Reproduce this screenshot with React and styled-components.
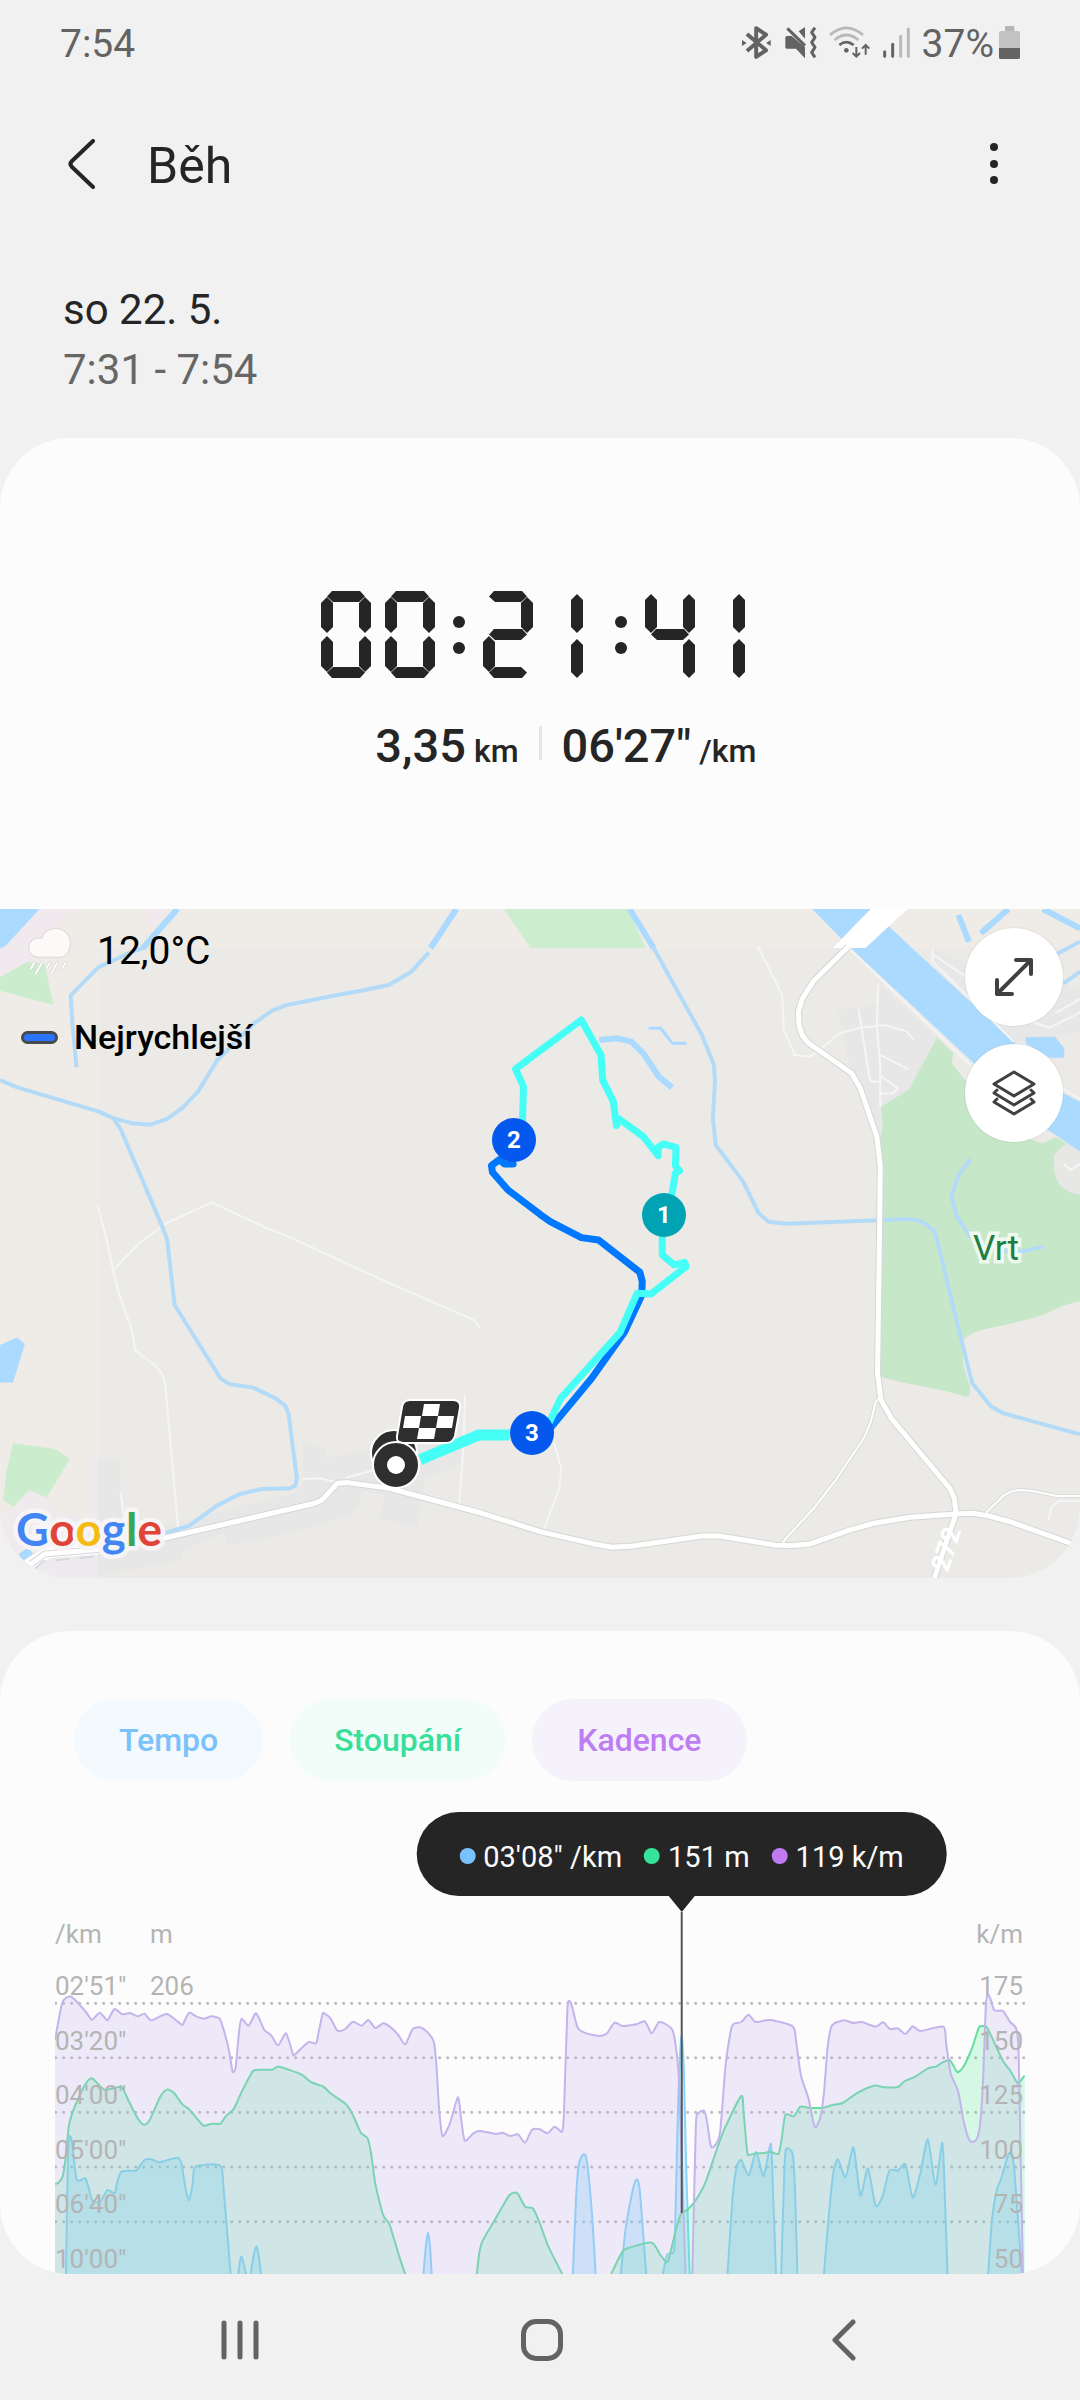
import React from 'react';
import styled, { createGlobalStyle } from 'styled-components';

const GlobalStyle = createGlobalStyle`
  * {
    box-sizing: border-box;
  }

  body {
    margin: 0;
    background: #f1f1f1;
    color: #252525;
    font-family: Roboto, 'Noto Sans', sans-serif;
  }

  button {
    border: 0;
    padding: 0;
    background: none;
    font-family: inherit;
    color: inherit;
    cursor: pointer;
  }

  h1, p, ul {
    margin: 0;
    padding: 0;
    font-weight: 400;
  }

  svg {
    display: block;
  }
`;

const Screen = styled.div`
  min-height: 100vh;
  display: flex;
  flex-direction: column;
`;

/* ---------- status bar ---------- */

const StatusBar = styled.div`
  height: 88px;
  padding: 0 60px;
  display: flex;
  align-items: center;
  justify-content: space-between;
  font-size: 39px;
  line-height: 44px;
  color: #636363;
`;

const StatusIcons = styled.div`
  display: flex;
  align-items: center;
  gap: 12px;
`;

const BatteryLevel = styled.span`
  display: flex;
  align-items: center;
  gap: 5px;
  svg {
    margin-bottom: 4px;
  }
`;

const StatusSvg = styled.svg`
  width: ${({ $w }) => $w}px;
  height: 33px;
  margin-bottom: 4px;
`;

/* ---------- header ---------- */

const AppBar = styled.header`
  height: 152px;
  padding: 0 54px 0 48px;
  display: flex;
  align-items: center;

  h1 {
    flex: 1;
    padding-top: 4px;
    font-size: 50px;
    line-height: 60px;
  }
`;

const IconButton = styled.button`
  width: ${({ $w }) => $w}px;
  height: 72px;
  display: flex;
  align-items: center;
  justify-content: center;
`;

const BackButton = styled(IconButton)`
  justify-content: flex-start;
  padding-left: 20px;
`;

const WorkoutDate = styled.section`
  padding: 40px 63px 38px;
  font-size: 42px;
  line-height: 60px;
`;

const TimeRange = styled.p`
  color: #666;
`;

const Card = styled.section`
  background: #fcfcfc;
  border-radius: 70px;
  overflow: hidden;
`;

/* ---------- summary ---------- */

const Summary = styled.div`
  padding: 153px 40px 133px;
`;

const Readout = styled.div`
  display: flex;
  justify-content: center;
  gap: 14px;
`;

const DigitBox = styled.span`
  width: 50px;
  height: 87px;
  display: grid;
`;

const Segment = styled.i`
  grid-area: 1 / 1;
  background: #252525;
`;

const HSegment = styled(Segment)`
  height: 11px;
  margin: 0 6px;
  align-self: ${({ $at }) => $at};
  clip-path: polygon(0 50%, 5px 0, calc(100% - 5px) 0, 100% 50%, calc(100% - 6px) 100%, 6px 100%);
  ${({ $at }) => $at === 'end' && 'transform: scaleY(-1);'}
`;

const VSegment = styled(Segment)`
  width: 12px;
  height: ${({ $open }) => ($open ? 39 : 36)}px;
  margin: ${({ $open }) => ($open ? 3 : 6)}px ${({ $mid }) => ($mid ? 14 : 0)}px;
  ${({ $open, $side }) => $open && $side === 'end' && 'margin-bottom: 0;'}
  align-self: ${({ $side }) => $side};
  justify-self: ${({ $at }) => $at};
  clip-path: polygon(50% 0, 100% 6px, 100% calc(100% - 6px), 50% 100%, 0 calc(100% - 6px), 0 6px);
`;

const Colon = styled.span`
  width: 20px;
  height: 87px;
  padding: 25px 0 24px;
  display: flex;
  flex-direction: column;
  align-items: center;
  justify-content: space-between;

  i {
    width: 12px;
    height: 12px;
    border-radius: 50%;
    background: #252525;
  }
`;

const Stats = styled.div`
  height: 60px;
  margin-top: 38px;
  display: grid;
  grid-template-columns: 1fr 3px 1fr;
  column-gap: 20px;
  font-size: 47px;
  line-height: 60px;

  p {
    font-weight: 500;
  }

  p:first-child {
    text-align: right;
  }

  small {
    margin-left: 8px;
    font-size: 32px;
    line-height: 32px;
  }
`;

const Divider = styled.span`
  height: 34px;
  margin-top: 10px;
  background: #e6e6e6;
`;

/* ---------- map ---------- */

const MapBox = styled.div`
  position: relative;
  height: 669px;
  display: flex;
  justify-content: space-between;
`;

const MapSvg = styled.svg`
  position: absolute;
  inset: 0;
  width: 100%;
  height: 100%;

  path, polyline {
    vector-effect: non-scaling-stroke;
  }
`;

const MapInfo = styled.div`
  position: relative;
  padding: 18px 21px;
  color: #000;
`;

const Weather = styled.p`
  display: flex;
  align-items: center;
  gap: 26px;
  padding-left: 7px;
  font-size: 39px;
  line-height: 48px;
`;

const Legend = styled.p`
  margin-top: 38px;
  display: flex;
  align-items: center;
  gap: 16px;
  font-size: 34px;
  line-height: 48px;
  font-weight: 500;

  i {
    width: 37px;
    height: 13px;
    border: 3px solid #47494d;
    border-radius: 7px;
    background: #2b74ff;
  }
`;

const MapTools = styled.div`
  position: relative;
  padding: 19px 17px;
  display: flex;
  flex-direction: column;
  gap: 18px;
`;

const RoundButton = styled.button`
  width: 98px;
  height: 98px;
  border-radius: 50%;
  background: #fff;
  display: flex;
  align-items: center;
  justify-content: center;
  box-shadow: 0 0 2px rgba(0, 0, 0, 0.15);
`;

/* ---------- chart ---------- */

const ChartCard = styled(Card)`
  margin-top: 53px;
  padding: 68px 55px 0;
`;

const Chips = styled.div`
  padding-left: 19px;
  display: flex;
  gap: 26px;
`;

const Chip = styled.button`
  height: 82px;
  padding: 0 45px;
  border-radius: 41px;
  background: ${({ $bg }) => $bg};
  color: ${({ $color }) => $color};
  font-size: 32px;
  line-height: 40px;
  font-weight: 500;
`;

const Chart = styled.div`
  position: relative;
  padding-top: 138px;
  color: #b4b4b4;
  font-size: 26px;
  line-height: 30px;
`;

const Units = styled.div`
  display: flex;

  span:first-child {
    width: 95px;
  }

  span:last-child {
    margin-left: auto;
    padding-right: 2px;
  }
`;

const Plot = styled.div`
  position: relative;
  height: 325px;
  padding-top: 22px;
  display: flex;
`;

const PlotSvg = styled.svg`
  position: absolute;
  inset: 0;
  width: 100%;
  height: 100%;

  path {
    vector-effect: non-scaling-stroke;
  }
`;

const Scale = styled.ul`
  position: relative;
  list-style: none;
  display: flex;
  flex-direction: column;
  justify-content: space-between;
  min-width: 95px;
  padding-right: ${({ $right }) => ($right ? 2 : 0)}px;
  margin-left: ${({ $right }) => ($right ? 'auto' : 0)};
  text-align: ${({ $right }) => ($right ? 'right' : 'left')};
`;

const Cursor = styled.div`
  position: absolute;
  top: 31px;
  bottom: 61px;
  left: 65%;
  transform: translateX(-50%);
  margin-left: -4px;
  display: flex;
  flex-direction: column;
  align-items: center;
`;

const Tooltip = styled.div`
  height: 84px;
  padding: 6px 43px 0;
  border-radius: 42px;
  background: #252525;
  color: #fcfcfc;
  display: flex;
  align-items: center;
  gap: 22px;
  font-size: 29px;
  line-height: 36px;
  white-space: nowrap;
`;

const Reading = styled.span`
  display: flex;
  align-items: center;
  gap: 8px;

  &::before {
    content: '';
    width: 16px;
    height: 16px;
    margin-bottom: 3px;
    border-radius: 50%;
    background: ${({ $color }) => $color};
  }
`;

const Arrow = styled.i`
  border: 13px solid transparent;
  border-top: 16px solid #252525;
  border-bottom: 0;
`;

const CursorLine = styled.i`
  flex: 1;
  width: 2px;
  background: #55555a;
`;

/* ---------- navigation ---------- */

const NavBar = styled.nav`
  height: 126px;
  padding: 6px 85px 0 89px;
  display: grid;
  grid-template-columns: repeat(3, 1fr);
  align-items: center;
  justify-items: center;
`;

const SEGMENTS = {
  0: 'abcdef',
  1: 'bc',
  2: 'abged',
  4: 'fgbc',
};

const Digit = ({ value }) => {
  const lit = SEGMENTS[value];
  const open = !lit.includes('a');
  const mid = value === '1';
  return (
    <DigitBox>
      {lit.includes('a') && <HSegment $at='start' />}
      {lit.includes('g') && <HSegment $at='center' />}
      {lit.includes('d') && <HSegment $at='end' />}
      {lit.includes('f') && <VSegment $at='start' $side='start' $open={open} />}
      {lit.includes('b') && (
        <VSegment $at='end' $side='start' $open={open} $mid={mid} />
      )}
      {lit.includes('e') && <VSegment $at='start' $side='end' $open={open} />}
      {lit.includes('c') && (
        <VSegment $at='end' $side='end' $open={open} $mid={mid} />
      )}
    </DigitBox>
  );
};

const Clock = ({ time }) => (
  <Readout role='timer' aria-label={time}>
    {time.split('').map((char, i) =>
      char === ':' ? (
        <Colon key={i}>
          <i />
          <i />
        </Colon>
      ) : (
        <Digit key={i} value={char} />
      )
    )}
  </Readout>
);

const WATER = '#b3dbf8';

const RIVERS = [
  '420,115 380,130 285,175 205,260 210,340 222,475',
  '0,513 50,535 285,607 330,628 385,643 437,647 485,630 530,597 575,548 630,455 735,345 790,305 830,289 980,258 1060,243 1128,228 1195,188 1245,130',
  '330,628 350,660 470,950 485,990 507,1188 640,1408 665,1425 735,1436 800,1468 828,1490 838,1515 862,1708 857,1731 840,1738 760,1740 695,1756 630,1790 550,1850 480,1873',
  '1898,117 1968,248 2038,378 2073,468 2076,518 2070,628 2078,708 2158,818 2203,913 2233,939 2288,944 2643,930 2678,938 2713,966 2725,1010 2778,1238 2823,1423 2878,1493 2913,1513 3136,1576',
  '2818,751 2783,798 2763,863 2778,923 2818,983 2878,1023 2968,1028 3028,1013',
  '3068,135 3136,98',
  '3088,223 3136,188',
];

const WIDE_RIVERS = [
  '515,0 415,117',
  '1325,0 1250,117',
  '1828,0 1898,117',
  '2783,18 2813,98',
  '2928,0 2848,73',
  '3028,0 3136,58',
  '1740,393 1793,388 1833,398 1868,433 1913,503 1951,536',
];

const LANES = [
  '283,887 310,993 328,1083 345,1153 383,1263 392,1323 455,1373 475,1403 480,1430 518,1868',
  '328,1083 360,1050 405,1003 478,945 615,880 780,960 825,977 1110,1113 1375,1233 1393,1255',
  '2201,113 2271,258 2276,363 2308,438 2353,443 2378,423 2438,373 2498,356 2568,348 2633,368 2653,393',
  '2550,223 2546,348 2556,473 2556,593',
  '2493,298 2523,498 2528,518 2553,518',
  '2553,436 2638,481',
  '2553,498 2608,538 2593,553 2553,555',
  '2463,117 2818,468',
  '2708,117 2708,158 2943,398',
  '2708,135 2800,200',
  '3000,340 3048,356 3136,310',
  '3068,310 3136,270',
  '3088,765 3108,782 3136,765',
  '3088,540 3136,570',
  '350,1748 360,1830',
  '878,1710 930,1708 970,1718',
  '1000,1718 1010,1705 1080,1685',
  '1350,1458 1345,1620 1333,1793',
  '1608,1598 1630,1680 1623,1740 1580,1860',
  '3043,1838 3053,1795 3073,1776 3136,1776',
];

const SIDE_ROADS = [
  '2553,1468 2543,1478 2528,1540 2508,1588 2428,1711 2363,1798 2278,1893 2272,1909',
  '2863,1811 2913,1761 2935,1748 2958,1743 2998,1746 3068,1761 3136,1761',
];

const ROADS = [
  '2463,113 2363,215 2330,268 2318,308 2320,348 2330,380 2348,403 2473,493 2498,538 2546,683 2556,773 2553,1033 2548,1393 2558,1473 2588,1528 2758,1738 2771,1768 2776,1813 2713,2007',
  '90,1965 130,1935 285,1922 475,1888 915,1783 935,1773 980,1723 1010,1721 1130,1738 1400,1813 1568,1868 1723,1905 1778,1915 1838,1911 2038,1881 2088,1881 2253,1909 2303,1910 2353,1905 2468,1863 2538,1843 2643,1825 2776,1815 2823,1813 2868,1820 2938,1840 3108,1903 3136,1912',
];

const FAST_TRACK =
  '1490,765 1465,765 1450,752 1427,770 1430,790 1475,843 1568,916 1598,938 1688,986 1738,993 1858,1090 1865,1118 1863,1160 1813,1270 1718,1408 1600,1555';
const TRACK =
  '1517,640 1520,533 1497,480 1568,425 1688,333 1745,438 1750,513 1781,578 1790,650 1798,630 1868,683 1911,740 1911,715 1926,705 1963,715 1961,770 1973,785 1961,793 1950,863 1923,973 1923,1038 1958,1068 1988,1060 1992,1073 1890,1155 1850,1153 1800,1271 1628,1468 1595,1540';

const Lines = ({ items, ...rest }) => (
  <g fill='none' strokeLinejoin='round' {...rest}>
    {items.map((points) => (
      <polyline key={points} points={points} />
    ))}
  </g>
);

const Pin = ({ x, y, color, children }) => (
  <g>
    <circle cx={x} cy={y} r='22' fill={color} />
    <text x={x} y={y + 8} fill='#fff' fontSize='24' fontWeight='700' textAnchor='middle'>
      {children}
    </text>
  </g>
);

const RunMap = () => (
  <MapSvg viewBox='0 0 1080 669' preserveAspectRatio='xMidYMid slice' fontFamily='Roboto, sans-serif'>
    <rect width='1080' height='669' fill='#ebeae6' />
    <g transform='scale(0.3444 0.3333)'>
      <path d='M0 0H3136V117H285V2007H0Z' fill='#efebe6' />
      <path d='M110 0H210L130 90 100 150 0 210V115Z' fill='#f0eaee' />
      <path d='M425 0H490L445 60Z' fill='#f0eaee' />
      <path d='M0 0H115L15 112 0 118Z' fill='#aadaff' />
      <path d='M0 205L80 158 130 165 155 288 0 245Z' fill='#cbedcd' />
      <path d='M1463 0H1823L1875 117H1540Z' fill='#cdeece' />
      <path d='M0 1308L50 1286 72 1305 38 1421H0Z' fill='#aadaff' />
      <path d='M38 1603L160 1620 203 1651 135 1766 85 1743 40 1793 10 1773 18 1690Z' fill='#cbedcd' />
      <path d='M85 1745L135 1768 170 1810 262 1830V1648H285V2007H0V1820L50 1790Z' fill='#efeaee' />
      <path
        d='M285 1650L348 1645 355 1880 860 1750 880 1720V1593L945 1620V1648L1070 1625 1340 1600V1665L1230 1710V1745L1210 1855 1100 1825 1120 1760 1050 1745Q1050 1800 1010 1820L860 1870 660 1910 650 1870 600 1895 530 1925V1955L285 2000Z'
        fill='#e7e7e7'
      />
      <path
        d='M2431 303L2548 288V223L2721 386 2638 543 2558 593 2555 680 2528 598 2498 538 2473 493Z'
        fill='#e7e7e7'
      />
      <path d='M2700 117L2800 160 3136 240V370L2943 398 2720 175Z' fill='#e7e7e7' />
      <path
        d='M2721 386L2768 433 2763 463 2800 510 2880 620Q2970 690 3028 703L3068 685 3136 733V1178Q3100 1180 3028 1218 2960 1240 2858 1261 2810 1275 2798 1293L2796 1363 2816 1433V1458L2803 1463 2753 1448 2618 1420 2553 1403V700L2563 653 2558 593 2638 543Z'
        fill='#c6e7c8'
      />
      <path d='M3136 700L3088 708 3060 740V780Q3070 850 3136 857Z' fill='#e7e7e5' />
      <path
        d='M2358 0H2528L2648 117 2943 398 3088 553 3136 578V728L3043 663 2828 463 2470 117Z'
        fill='#aadaff'
      />
      <path d='M2978 385L3063 383 3090 418V446H3048L2978 403Z' fill='#aadaff' />
      <path d='M2528 0H2635L2513 117H2418Z' fill='#fff' />
      <Lines items={LANES} stroke='#f5f5f6' strokeWidth='2' />
      <Lines items={RIVERS} stroke={WATER} strokeWidth='4' />
      <Lines items={WIDE_RIVERS} stroke='#aadaff' strokeWidth='6' />
      <path d='M1883 358H1918L1953 403H1993' fill='none' stroke='#aadaff' strokeWidth='3' />
      <path d='M60 1945L90 1925' fill='none' stroke='#aadaff' strokeWidth='8' />
      <path d='M80 1970L140 1930 285 1918' fill='none' stroke='#fff' strokeWidth='12' />
      <path d='M100 1980L125 1957 285 1942' fill='none' stroke='#d9d8df' strokeWidth='2' strokeDasharray='14 10' />
      <Lines items={SIDE_ROADS} stroke='#dcdcde' strokeWidth='4' />
      <Lines items={ROADS} stroke='#d6d6d9' strokeWidth='7' />
      <Lines items={SIDE_ROADS} stroke='#fff' strokeWidth='2' />
      <Lines items={ROADS} stroke='#fff' strokeWidth='5' />
      <g strokeLinecap='round'>
        <Lines items={[FAST_TRACK]} stroke='#0077ff' strokeWidth='7' />
        <Lines items={[TRACK]} stroke='#45fff7' strokeWidth='7' />
      </g>
      <path d='M1480 1578H1390L1220 1652' fill='none' stroke='#45fff7' strokeWidth='11' />
    </g>
    <text x='973' y='351' fontSize='35' fill='#1d8043' stroke='#f0f9f0' strokeWidth='7' paintOrder='stroke'>
      Vrt
    </text>
    <text
      x='946'
      y='649'
      fontSize='26'
      fontWeight='700'
      fill='#fff'
      textAnchor='middle'
      transform='rotate(-72 946 640)'
    >
      272
    </text>
    <Pin x={514} y={231} color='#0558ee'>2</Pin>
    <Pin x={664} y={306} color='#00a3b4'>1</Pin>
    <Pin x={532} y={524} color='#0558ee'>3</Pin>
    <g fill='#2e2e2e' stroke='#fff' strokeWidth='2'>
      <circle cx='394' cy='544' r='23' />
      <path d='M410 491H453Q461 491 460 499L455 527Q453 534 446 534H403Q396 534 397 527L402 498Q403 491 410 491Z' />
      <circle cx='396' cy='556' r='23' />
    </g>
    <circle cx='396' cy='556' r='9' fill='#fff' />
    <g fill='#fff'>
      <path d='M424 495H440L438 507H422Z' />
      <path d='M405 507H421L419 519H403Z' />
      <path d='M438 507H454L452 519H436Z' />
      <path d='M419 519H436L434 530H417Z' />
    </g>
    <text
      x='16'
      y='637'
      fontFamily='Lato, sans-serif'
      fontSize='46'
      fontWeight='700'
      stroke='#f6f4f5'
      strokeWidth='9'
      strokeLinejoin='round'
      paintOrder='stroke'
    >
      <tspan fill='#4285f4'>G</tspan>
      <tspan fill='#e04438'>o</tspan>
      <tspan fill='#f5bb15'>o</tspan>
      <tspan fill='#4285f4'>g</tspan>
      <tspan fill='#3aa757'>l</tspan>
      <tspan fill='#e04438'>e</tspan>
    </text>
  </MapSvg>
);

// Each area of a series is a separate list of x,y pairs
const TEMPO = [
  '192,1122 197,800 203,710 210,730 223,838 248,835 258,865 268,900 290,907 312,870 333,880 340,850 353,815 395,812 405,800 420,780 440,778 463,787 515,773 527,790 540,870 550,900 560,850 568,800 640,797 650,870 670,1122',
  '692,1122 698,1080 703,1072 715,1122',
  '728,1122 738,1060 745,1040 752,1070 758,1122',
  '1230,1122 1237,1040 1243,997 1249,1040 1254,1122',
  '1664,1122 1673,900 1680,800 1690,768 1700,765 1708,810 1720,950 1730,1122',
  '1803,1122 1818,980 1840,860 1850,838 1858,870 1868,1000 1877,1122',
  '1925,1122 1938,1063 1958,1050 1963,900 1970,600 1979,410 1986,500 1993,800 2003,1122',
  '2113,1122 2128,890 2140,800 2153,780 2175,826 2196,755 2218,828 2239,731 2246,900 2254,1122',
  '2269,1122 2276,880 2282,750 2303,765 2310,900 2316,1122',
  '2393,1122 2406,960 2420,820 2434,778 2456,832 2479,742 2499,887 2521,805 2543,917 2563,890 2583,812 2608,812 2630,793 2651,893 2673,820 2695,718 2717,855 2737,728 2744,880 2752,1122',
  '2870,1122 2881,960 2895,870 2908,835 2928,765 2938,760 2946,810 2968,1122',
];

const CLIMB = [
  '160,852 170,848 182,830 190,780 200,680 210,640 230,590 250,550 267,535 285,552 305,570 335,563 355,563 375,605 400,655 418,674 435,660 465,592 485,569 505,578 530,613 550,628 590,676 615,671 640,671 655,650 680,625 700,580 725,530 740,510 790,509 810,500 875,523 900,544 920,553 940,560 960,580 1005,613 1025,645 1048,698 1068,715 1078,760 1090,850 1110,935 1118,955 1132,975 1160,1070 1177,1122',
  '1385,1122 1392,1060 1402,1022 1440,955 1480,885 1503,880 1525,920 1548,925 1568,970 1593,1040 1633,1122',
  '1775,1122 1808,1055 1828,1043 1893,1028 1918,1065 1936,1086 1943,1075 1963,990 1978,942 1998,928 2018,905 2048,850 2078,760 2103,690 2153,588 2160,640 2170,755 2175,765 2195,760 2218,759 2238,755 2261,762 2270,720 2281,645 2305,649 2325,620 2348,623 2390,623 2418,615 2448,609 2488,580 2538,557 2568,562 2608,561 2628,543 2658,530 2695,505 2718,500 2738,487 2758,480 2768,495 2781,517 2798,500 2823,445 2843,382 2853,379 2868,385 2913,483 2933,510 2956,550 2968,537 2976,527',
];

const CADENCE = [
  '160,420 178,320 185,300 200,290 210,292 245,330 265,358 272,356 290,338 310,360 315,358 333,327 355,343 378,339 400,349 420,341 440,361 485,342 528,374 535,365 550,338 570,349 593,356 615,349 638,356 650,390 665,450 675,512 680,515 685,500 695,390 702,356 722,377 740,343 745,341 755,360 768,390 788,406 808,436 831,400 850,460 855,465 895,427 918,430 925,400 937,342 942,340 960,355 980,392 1003,387 1025,365 1050,377 1070,360 1090,384 1113,370 1135,382 1157,405 1177,433 1198,388 1220,382 1240,395 1260,425 1268,500 1275,620 1285,708 1307,670 1330,592 1340,660 1350,722 1375,700 1395,693 1440,702 1460,698 1483,708 1505,703 1525,728 1545,690 1568,688 1590,700 1611,680 1633,695 1638,640 1648,330 1655,303 1663,325 1678,383 1703,400 1743,408 1763,400 1785,368 1808,378 1848,373 1873,364 1893,400 1913,367 1933,372 1953,390 1963,440 1973,560 1991,1122',
  '2011,1122 2021,680 2028,640 2045,632 2053,660 2065,740 2081,730 2091,700 2098,620 2108,490 2123,390 2131,371 2153,366 2174,344 2195,366 2238,360 2303,380 2313,430 2326,525 2348,595 2363,670 2371,680 2383,650 2393,580 2403,450 2413,385 2423,370 2453,361 2478,369 2503,366 2543,380 2565,367 2585,387 2608,385 2630,402 2651,379 2673,393 2740,380 2748,430 2761,520 2783,575 2798,660 2813,715 2825,726 2838,715 2848,660 2856,520 2863,320 2869,283 2878,300 2888,331 2913,333 2933,365 2951,385 2958,440 2963,700 2971,1122',
];

const smooth = (list) => {
  const p = list.split(' ').map((pair) => pair.split(',').map(Number));
  let d = `M${p[0]}`;
  for (let i = 0; i < p.length - 1; i += 1) {
    const a = p[i - 1] || p[i];
    const b = p[i];
    const c = p[i + 1];
    const e = p[i + 2] || c;
    d += `C${b[0] + (c[0] - a[0]) / 9},${b[1] + (c[1] - a[1]) / 9} ${
      c[0] - (e[0] - b[0]) / 9
    },${c[1] - (e[1] - b[1]) / 9} ${c}`;
  }
  return d;
};

const Series = ({ areas, fill, stroke }) =>
  areas.map((area) => {
    const line = smooth(area);
    const first = area.split(',')[0];
    const last = area.split(' ').pop().split(',')[0];
    return (
      <g key={area}>
        <path d={`${line}L${last},1122L${first},1122Z`} fill={fill} />
        <path d={line} fill='none' stroke={stroke} strokeWidth='2' strokeLinejoin='round' />
      </g>
    );
  });

const tempoScale = ["02'51\"", "03'20\"", "04'00\"", "05'00\"", "06'40\"", "10'00\""];
const cadenceScale = [175, 150, 125, 100, 75, 50];

const App = () => (
  <Screen>
    <GlobalStyle />
    <StatusBar>
      <span>7:54</span>
      <StatusIcons>
        <StatusSvg $w={29} viewBox='0 0 88 99'>
          <path d='M15 24L73 73 43 93V6L73 26 15 75' fill='none' stroke='#636363' strokeWidth='12' strokeLinejoin='round' />
          <path d='M0 42L14 51 0 60ZM87 42L73 51 87 60Z' fill='#636363' />
        </StatusSvg>
        <StatusSvg $w={34} viewBox='-6 -2 102 99'>
          <path d='M5 28H20L60 62V95L33 66H5Q1 66 1 61V33Q1 28 5 28ZM41 14L60 1V36Z' fill='#636363' />
          <path d='M7 5L60 57M90 3L80 17 90 32 80 47 90 62 80 77 90 92' fill='none' stroke='#636363' strokeWidth='9' strokeLinejoin='round' />
        </StatusSvg>
        <StatusSvg $w={42} viewBox='0 0 126 99'>
          <g fill='none' strokeWidth='8'>
            <path d='M3 27Q52-16 102 27M17 42Q52 12 88 42' stroke='#b9b9b9' />
            <path d='M31 57Q52 40 74 57' stroke='#636363' />
            <path d='M82 63V90M71 81L82 92 93 81M110 86V60M99 68L110 57 121 68' stroke='#636363' strokeWidth='6' />
          </g>
          <circle cx='52' cy='73' r='7' fill='#636363' />
        </StatusSvg>
        <StatusSvg $w={27} viewBox='0 -5 81 99'>
          <path d='M5 72V86M29 50V86' stroke='#636363' strokeWidth='9' strokeLinecap='round' />
          <path d='M53 26V86M76 4V86' stroke='#b9b9b9' strokeWidth='9' strokeLinecap='round' />
        </StatusSvg>
        <BatteryLevel>
          37%
          <svg width='21' height='33' viewBox='0 0 63 99'>
            <path d='M18 15V4Q18 0 22 0H42Q46 0 46 4V15Z' fill='#b5b5b5' />
            <rect y='15' width='63' height='84' rx='5' fill='#c2c2c2' />
            <path d='M0 66H63V94Q63 99 58 99H5Q0 99 0 94Z' fill='#636363' />
          </svg>
        </BatteryLevel>
      </StatusIcons>
    </StatusBar>

    <AppBar>
      <BackButton $w={99} aria-label='Zpět'>
        <svg width='28' height='50' viewBox='0 0 28 50'>
          <path d='M25 2L4 22Q1 25 4 28L25 48' fill='none' stroke='#252525' strokeWidth='4' strokeLinecap='round' />
        </svg>
      </BackButton>
      <h1>Běh</h1>
      <IconButton $w={64} aria-label='Další možnosti'>
        <svg width='10' height='44' viewBox='0 0 10 44' fill='#252525'>
          <circle cx='5' cy='5' r='4' />
          <circle cx='5' cy='22' r='4' />
          <circle cx='5' cy='38' r='4' />
        </svg>
      </IconButton>
    </AppBar>

    <WorkoutDate>
      <p>so 22. 5.</p>
      <TimeRange>7:31 - 7:54</TimeRange>
    </WorkoutDate>

    <Card>
      <Summary>
        <Clock time='00:21:41' />
        <Stats>
          <p>
            3,35<small>km</small>
          </p>
          <Divider />
          <p>
            06'27"<small>/km</small>
          </p>
        </Stats>
      </Summary>
      <MapBox>
        <RunMap />
        <MapInfo>
          <Weather>
            <svg width='43' height='48' viewBox='0 0 124 138'>
              <path
                d='M31 87C10 87 2 72 2 59C2 42 18 28 40 32C46 12 62 4 80 4C104 4 122 22 122 46C122 72 108 87 92 87Z'
                fill='#fbfaf8'
                stroke='#dcd9d7'
                strokeWidth='3'
              />
              <g strokeLinecap='round'>
                <path d='M18 103L8 120M40 103L22 135M62 103L54 118M84 103L66 135M108 103L98 120' stroke='#d6d6d2' strokeWidth='9' />
                <path d='M18 103L8 120M40 103L22 135M62 103L54 118M84 103L66 135M108 103L98 120' stroke='#fff' strokeWidth='5' />
              </g>
            </svg>
            12,0°C
          </Weather>
          <Legend>
            <i />
            Nejrychlejší
          </Legend>
        </MapInfo>
        <MapTools>
          <RoundButton aria-label='Zvětšit mapu'>
            <svg width='40' height='40' viewBox='0 0 40 40' fill='none' stroke='#404040' strokeWidth='4' strokeLinecap='round' strokeLinejoin='round'>
              <path d='M3 37L37 3M22 3H37V17M3 23V37H18' />
            </svg>
          </RoundButton>
          <RoundButton aria-label='Vrstvy mapy'>
            <svg width='44' height='46' viewBox='-1 0 44 46' fill='none' stroke='#404040' strokeWidth='3' strokeLinejoin='round' strokeLinecap='round'>
              <path d='M21 2L41 14 21 26 1 14Z' />
              <path d='M4 20L1 23 21 35 41 23 38 20M4 29L1 32 21 44 41 32 38 29' />
            </svg>
          </RoundButton>
        </MapTools>
      </MapBox>
    </Card>

    <ChartCard>
      <Chips>
        <Chip $bg='#f4f9fd' $color='#7ac2fa'>Tempo</Chip>
        <Chip $bg='#f2fdf9' $color='#38df9a'>Stoupání</Chip>
        <Chip $bg='#f5f2fc' $color='#bf7df2'>Kadence</Chip>
      </Chips>
      <Chart>
        <Units>
          <span>/km</span>
          <span>m</span>
          <span>k/m</span>
        </Units>
        <Plot>
          <PlotSvg viewBox='160 147 2817 975' preserveAspectRatio='none'>
            <path
              d='M162 310H2977M162 473H2977M162 637H2977M162 801H2977M162 965H2977'
              stroke='#b9b9b9'
              strokeWidth='3'
              strokeLinecap='round'
              strokeDasharray='0 8'
            />
            <Series areas={TEMPO} fill='rgba(105, 215, 255, 0.3)' stroke='#84d6fa' />
            <Series areas={CLIMB} fill='rgba(62, 237, 142, 0.2)' stroke='#62df9f' />
            <Series areas={CADENCE} fill='rgba(196, 176, 236, 0.25)' stroke='#c4b4ec' />
          </PlotSvg>
          <Scale>
            {tempoScale.map((label) => (
              <li key={label}>{label}</li>
            ))}
          </Scale>
          <Scale>
            <li>206</li>
          </Scale>
          <Scale $right>
            {cadenceScale.map((label) => (
              <li key={label}>{label}</li>
            ))}
          </Scale>
        </Plot>
        <Cursor>
          <Tooltip>
            <Reading $color='#79c1fd'>03'08" /km</Reading>
            <Reading $color='#35e39a'>151 m</Reading>
            <Reading $color='#bf7af2'>119 k/m</Reading>
          </Tooltip>
          <Arrow />
          <CursorLine />
        </Cursor>
      </Chart>
    </ChartCard>

    <NavBar>
      <IconButton $w={100} aria-label='Poslední aplikace'>
        <svg width='38' height='42' viewBox='0 0 38 42'>
          <path d='M3 4V38M19 4V38M35 4V38' stroke='#636363' strokeWidth='5' strokeLinecap='round' />
        </svg>
      </IconButton>
      <IconButton $w={100} aria-label='Domů'>
        <svg width='42' height='42' viewBox='0 0 84 84'>
          <rect x='5' y='5' width='74' height='74' rx='25' fill='none' stroke='#636363' strokeWidth='10' />
        </svg>
      </IconButton>
      <IconButton $w={100} aria-label='Zpět'>
        <svg width='24' height='42' viewBox='0 0 24 42'>
          <path d='M21 3L3 21 21 39' fill='none' stroke='#636363' strokeWidth='5' strokeLinecap='round' strokeLinejoin='round' />
        </svg>
      </IconButton>
    </NavBar>
  </Screen>
);

export default App;
